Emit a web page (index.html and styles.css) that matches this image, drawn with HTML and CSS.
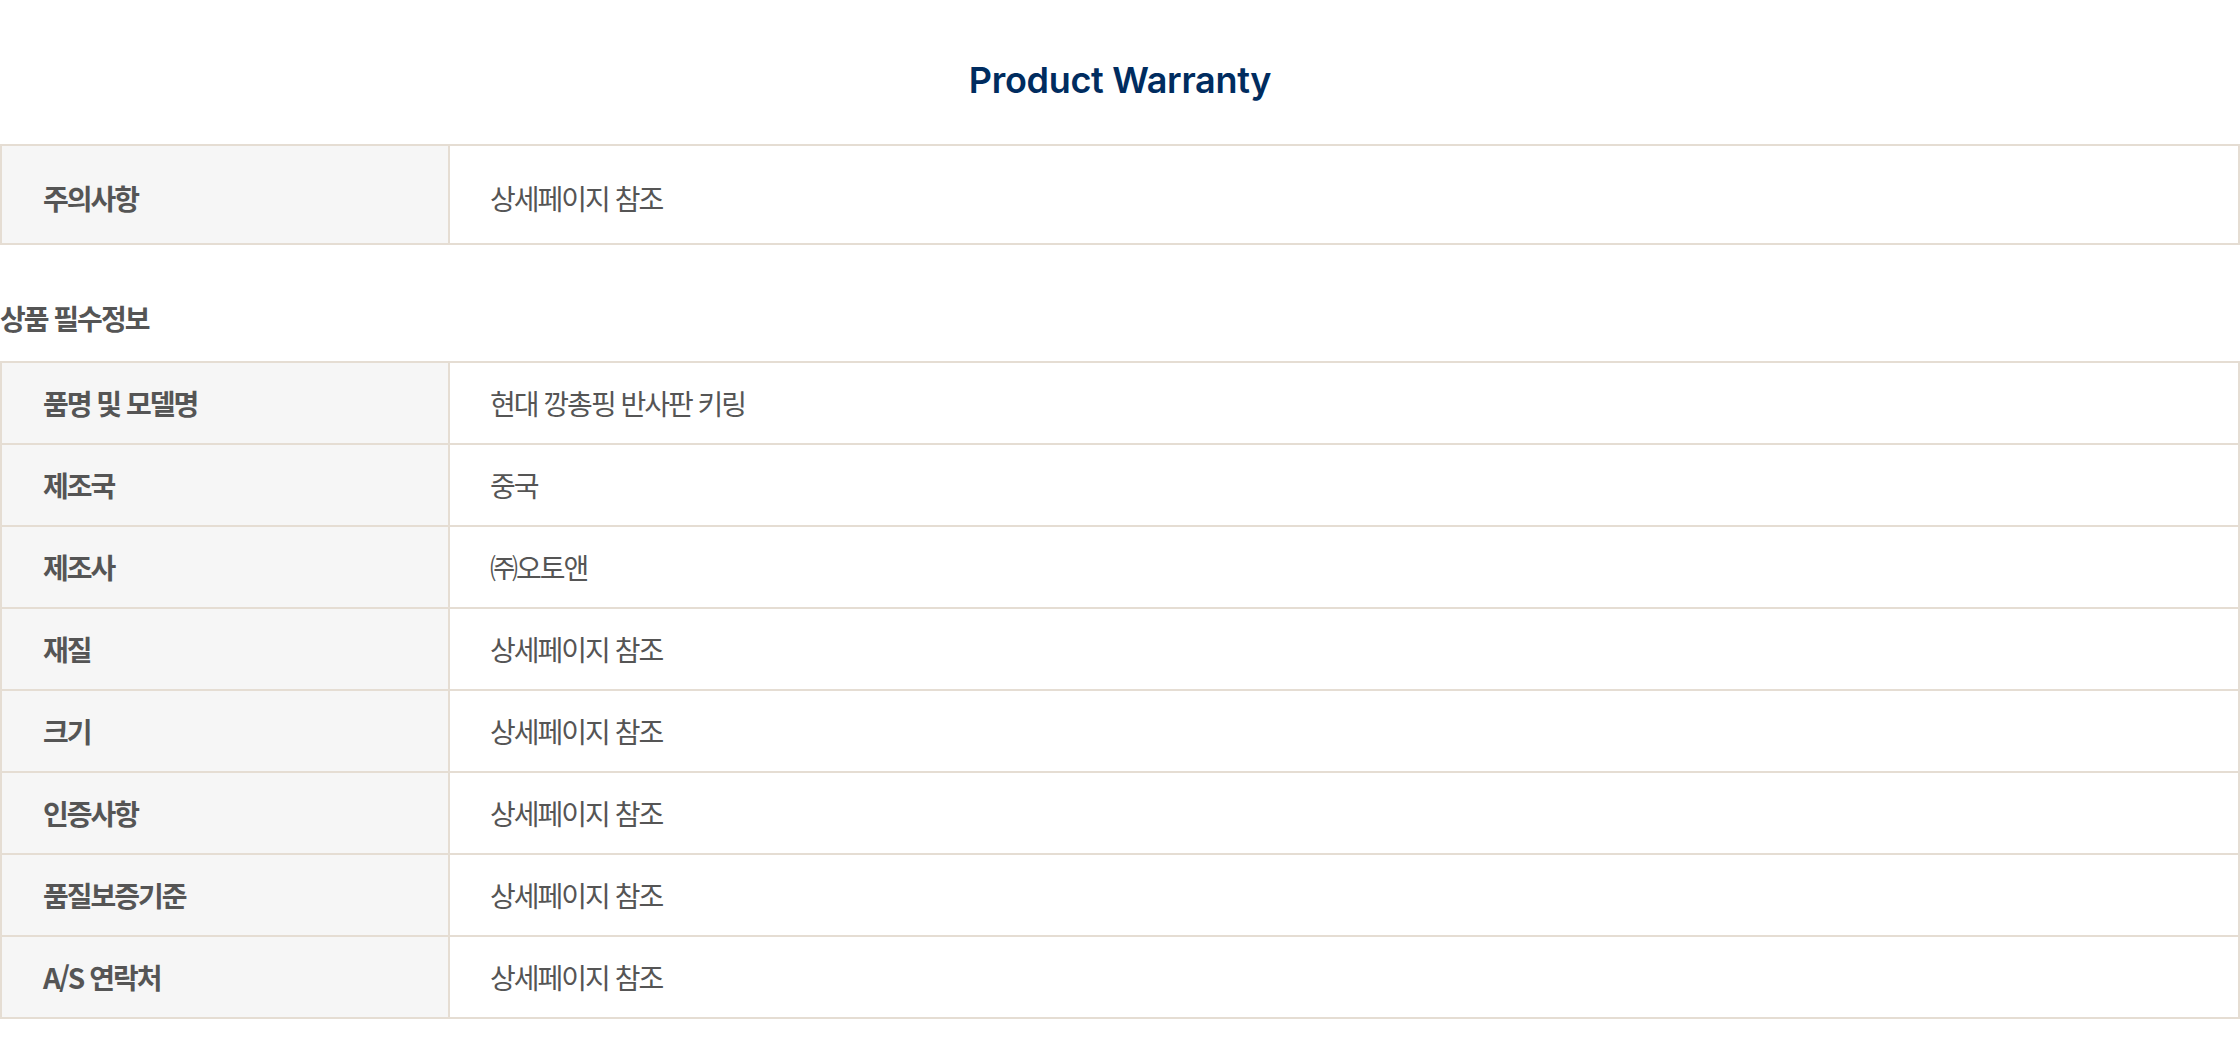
FILE: index.html
```html
<!DOCTYPE html>
<html lang="ko">
<head>
<meta charset="utf-8">
<title>Product Warranty</title>
<link rel="stylesheet" href="styles.css">
</head>
<body>
<div class="page">
  <h2 class="title">Product Warranty</h2>
  <table class="info info-single">
    <colgroup><col class="col-label"><col></colgroup>
    <tbody>
      <tr><th>주의사항</th><td>상세페이지 참조</td></tr>
    </tbody>
  </table>

  <h3 class="section">상품 필수정보</h3>
  <table class="info">
    <colgroup><col class="col-label"><col></colgroup>
    <tbody>
      <tr><th>품명 및 모델명</th><td>현대 깡총핑 반사판 키링</td></tr>
      <tr><th>제조국</th><td>중국</td></tr>
      <tr><th>제조사</th><td>㈜오토앤</td></tr>
      <tr><th>재질</th><td>상세페이지 참조</td></tr>
      <tr><th>크기</th><td>상세페이지 참조</td></tr>
      <tr><th>인증사항</th><td>상세페이지 참조</td></tr>
      <tr><th>품질보증기준</th><td>상세페이지 참조</td></tr>
      <tr><th>A/S 연락처</th><td>상세페이지 참조</td></tr>
    </tbody>
  </table>
</div>
</body>
</html>
```

FILE: styles.css
```css
html, body {
  margin: 0;
  padding: 0;
  background: #ffffff;
}

.page {
  width: 2240px;
  font-family: "Noto Sans CJK KR", "Noto Sans", sans-serif;
  color: #555555;
}

.title {
  margin: 60px 0 44px;
  font-family: Inter, "Noto Sans", sans-serif;
  font-weight: 600;
  font-size: 36px;
  line-height: 40px;
  letter-spacing: -0.3px;
  text-align: center;
  color: #002c5f;
}

.info {
  width: 100%;
  border-collapse: collapse;
  table-layout: fixed;
  font-size: 28px;
  letter-spacing: -2px;
}

.col-label {
  width: 448px;
}

.info th,
.info td {
  height: 80px;
  border: 2px solid #e5ddd3;
  text-align: left;
  vertical-align: middle;
  line-height: 36px;
  padding: 0 0 0 40px;
}

.info th {
  background: #f6f6f6;
  font-weight: 700;
  color: #555555;
  padding-left: 41px;
}

.info td {
  background: #ffffff;
  font-weight: 400;
  color: #555555;
}

.info-single th,
.info-single td {
  height: 91px;
  padding-top: 6px;
}

.section {
  margin: 55px 0 25px;
  font-size: 28px;
  line-height: 36px;
  letter-spacing: -2px;
  font-weight: 700;
  color: #555555;
}
```
